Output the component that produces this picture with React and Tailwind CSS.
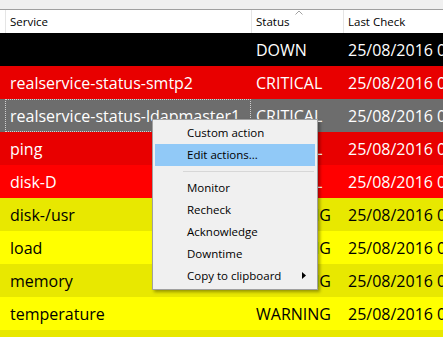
import React from "react";

const rows = [
  { name: "", status: "DOWN", bg: "bg-[#000000]", fg: "text-white" },
  { name: "realservice-status-smtp2", status: "CRITICAL", bg: "bg-[#e80000]", fg: "text-white" },
  { name: "realservice-status-ldapmaster1", status: "CRITICAL", bg: "bg-[#6d6d6d]", fg: "text-white", sel: true },
  { name: "ping", status: "CRITICAL", bg: "bg-[#e80000]", fg: "text-white" },
  { name: "disk-D", status: "CRITICAL", bg: "bg-[#ff0000]", fg: "text-white" },
  { name: "disk-/usr", status: "WARNING", bg: "bg-[#e8e800]", fg: "text-black" },
  { name: "load", status: "WARNING", bg: "bg-[#ffff00]", fg: "text-black" },
  { name: "memory", status: "WARNING", bg: "bg-[#e8e800]", fg: "text-black" },
  { name: "temperature", status: "WARNING", bg: "bg-[#ffff00]", fg: "text-black" },
  { name: "", status: "", bg: "bg-[#e8e800]", fg: "text-black", noDate: true },
];

const menuItems = [
  { label: "Custom action" },
  { label: "Edit actions...", hi: true },
  { sep: true },
  { label: "Monitor" },
  { label: "Recheck" },
  { label: "Acknowledge" },
  { label: "Downtime" },
  { label: "Copy to clipboard", sub: true },
];

export default function App() {
  return (
    <div
      className="relative w-[443px] h-[337px] overflow-hidden bg-[#f0f0f0]"
      style={{ fontFamily: '"Open Sans", "Noto Sans", sans-serif' }}
    >
      <div className="h-[9px] bg-[#f0f0f0]" />
      <div className="h-px bg-[#a0a0a0]" />
      {/* header */}
      <div className="relative flex h-[23px] bg-white text-[11.5px] text-black">
        <div className="w-[5px]" />
        <div className="flex w-[246px] items-center border-l border-[#e5e5e5] pl-[4px]">Service</div>
        <div className="flex w-[92px] items-center border-l border-[#e5e5e5] pl-[4px]">Status</div>
        <div className="flex flex-1 items-center whitespace-nowrap border-l border-[#e5e5e5] pl-[4px]">Last Check</div>
        <svg className="absolute left-[295px] top-0" width="8" height="5" viewBox="0 0 8 5">
          <polyline points="0.5,4.5 4,1 7.5,4.5" fill="none" stroke="#a0a0a0" strokeWidth="1" />
        </svg>
      </div>
      {/* rows */}
      <div className="flex flex-col text-[16px]">
        {rows.map((r, i) => (
          <div key={i} className={`flex h-[33px] items-center ${r.bg} ${r.fg}`}>
            <div className="w-[5px]" />
            <div
              className={`flex h-full w-[246px] items-center whitespace-nowrap ${
                r.sel ? "border border-dotted border-[#d0d0d0] pl-[4px]" : "pl-[5px]"
              }`}
            >
              {r.name}
            </div>
            <div className="flex h-full w-[92px] items-center pl-[5px]">{r.status}</div>
            <div className="flex h-full flex-1 items-center overflow-hidden whitespace-nowrap pl-[5px]">
              {r.noDate ? "" : "25/08/2016 00:00:00"}
            </div>
          </div>
        ))}
      </div>
      {/* context menu */}
      <div className="absolute left-[152px] top-[119px] w-[166px] border border-[#a0a0a0] bg-[#f0f0f0] p-[2px] text-[11.5px] text-black shadow-[2px_2px_3px_rgba(0,0,0,0.35)]">
        {menuItems.map((m, i) =>
          m.sep ? (
            <div key={i} className="flex h-[11px] items-center pl-[28px] pr-[1px]">
              <div className="h-px w-full bg-[#d7d7d7]" />
            </div>
          ) : (
            <div
              key={i}
              className={`relative flex h-[22px] items-center pl-[32px] ${m.hi ? "bg-[#91c9f7]" : ""}`}
            >
              {m.label}
              {m.sub && (
                <svg className="absolute left-[147px] top-[7px]" width="4" height="7" viewBox="0 0 4 7">
                  <polygon points="0,0 4,3.5 0,7" fill="#000" />
                </svg>
              )}
            </div>
          )
        )}
      </div>
    </div>
  );
}
